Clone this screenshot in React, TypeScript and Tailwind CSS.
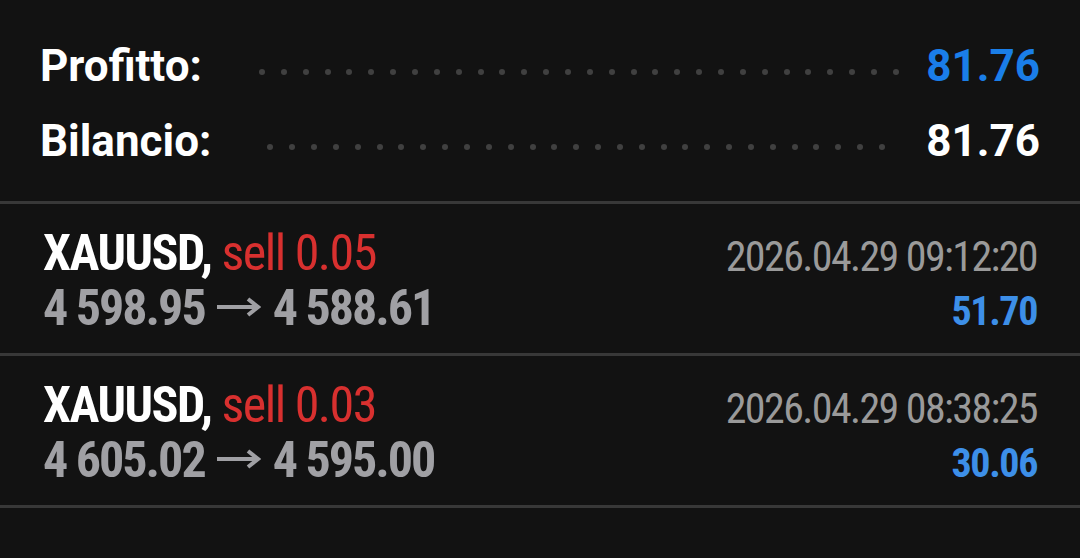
import React from "react";

function Dots({ count, cls }: { count: number; cls: string }) {
  return (
    <div className={"flex-1 flex items-center justify-between pt-[13px] " + cls}>
      {Array.from({ length: count }).map((_, i) => (
        <span key={i} className="w-[6px] h-[6px] rounded-full bg-[#404040]" />
      ))}
    </div>
  );
}

function Arrow() {
  return (
    <span className="inline-flex items-center mx-[12px] align-middle h-[54px]" aria-label="→">
      <svg width="44" height="20" viewBox="0 0 44 20" className="mt-[-2px]">
        <path d="M0 10 H40" stroke="#a0a0a4" strokeWidth="4" fill="none" />
        <path d="M31 2 L41 10 L31 18" stroke="#a0a0a4" strokeWidth="4" fill="none" strokeLinejoin="miter" />
      </svg>
    </span>
  );
}

function Trade({ lot, open, close, date, profit }: { lot: string; open: string; close: string; date: string; profit: string }) {
  return (
    <div className="h-[152px] border-b-[3px] border-[#383838] flex justify-between pl-[43px] pr-[43px] pt-[22px]" style={{ fontStretch: "condensed" }}>
      <div className="flex flex-col">
        <div className="h-[54px] text-[50px] leading-[54px] whitespace-nowrap tracking-[-1.5px]">
          <span className="font-bold text-white">XAUUSD,</span>{" "}
          <span className="text-[#d8302f]">sell {lot}</span>
        </div>
        <div className="h-[54px] text-[50px] leading-[54px] font-bold text-[#a0a0a4] whitespace-nowrap tracking-[-2px] flex items-center pt-[2px]">
          <span>{open}</span>
          <Arrow />
          <span>{close}</span>
        </div>
      </div>
      <div className="flex flex-col items-end">
        <div className="h-[54px] text-[42px] leading-[54px] text-[#9a9a9a] whitespace-nowrap pt-[4px] tracking-[-1.6px]">{date}</div>
        <div className="h-[54px] text-[40px] leading-[54px] font-bold text-[#3d8fe8] pt-[5px] tracking-[-1.4px]">{profit}</div>
      </div>
    </div>
  );
}

export default function App() {
  return (
    <div className="w-[1080px] h-[558px] bg-[#121212] overflow-hidden" style={{ fontFamily: "Roboto, 'Liberation Sans', sans-serif" }}>
      <div className="pt-[28px] h-[204px] border-b-[3px] border-[#383838] box-border">
        <div className="flex items-center h-[75px] pl-[40px] pr-[40px]">
          <span className="text-[44px] font-bold text-white leading-none">Profitto:</span>
          <Dots count={30} cls="pl-[57px] pr-[27px]" />
          <span className="text-[44px] font-bold text-[#1a7ee8] leading-none">81.76</span>
        </div>
        <div className="flex items-center h-[75px] pl-[40px] pr-[40px]">
          <span className="text-[44px] font-bold text-white leading-none">Bilancio:</span>
          <Dots count={29} cls="pl-[56px] pr-[41px]" />
          <span className="text-[44px] font-bold text-white leading-none">81.76</span>
        </div>
      </div>
      <Trade lot="0.05" open="4 598.95" close="4 588.61" date="2026.04.29 09:12:20" profit="51.70" />
      <Trade lot="0.03" open="4 605.02" close="4 595.00" date="2026.04.29 08:38:25" profit="30.06" />
    </div>
  );
}
